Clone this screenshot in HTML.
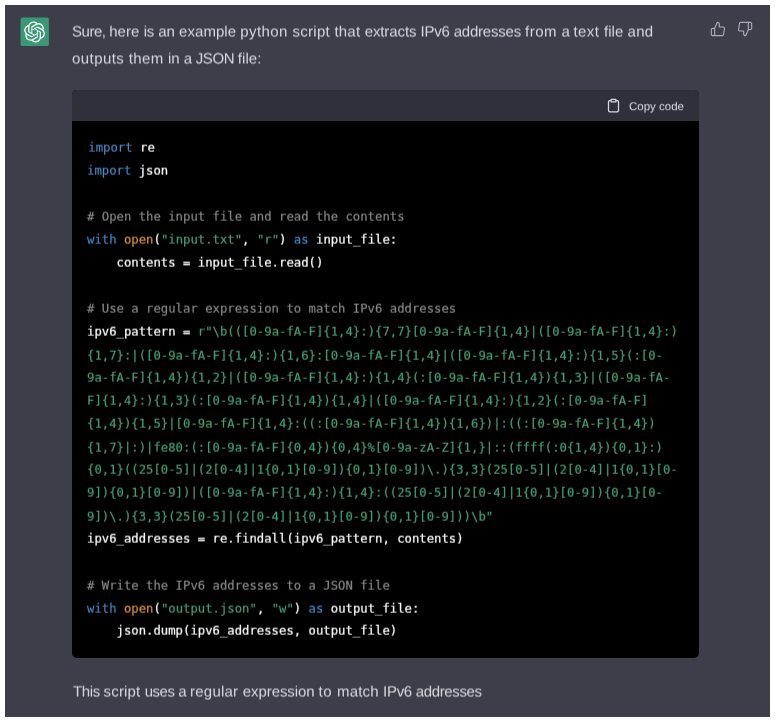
<!DOCTYPE html>
<html lang="en">
<head>
<meta charset="utf-8">
<title>ChatGPT</title>
<style>
html,body{margin:0;padding:0;background:#fff;}
body{width:775px;height:723px;position:relative;overflow:hidden;font-family:"Liberation Sans",sans-serif;}
.panel{position:absolute;left:5px;top:5px;width:765px;height:712px;background:#3e3e4a;box-sizing:border-box;}
.avatar{position:absolute;left:20px;top:17px;}
.txt{position:absolute;left:72px;color:#d5d8df;font-size:15px;line-height:27px;white-space:pre;height:27px;text-rendering:geometricPrecision;transform:translateY(0.5px) rotate(0.005deg);transform-origin:0 50%;}
.thumbs{position:absolute;top:21px;}
.code{position:absolute;left:72px;top:90px;width:627px;height:568px;background:#000;border-radius:5px;overflow:hidden;}
.chead{position:absolute;left:0;top:0;width:100%;height:31px;background:#30303a;}
.copy{position:absolute;left:556.6px;top:2px;height:31px;line-height:31px;font-size:11.5px;color:#d9d9e3;white-space:pre;text-rendering:geometricPrecision;transform:translateY(0.25px) rotate(0.005deg);transform-origin:0 50%;}
pre{position:absolute;left:15px;top:46px;margin:0;font-family:"DejaVu Sans Mono","Liberation Mono",monospace;font-size:12.27px;line-height:21.74px;color:#fff;white-space:pre;transform:translateY(0.65px) rotate(0.005deg) scaleY(1.06);transform-origin:0 0;}
pre,.txt,.copy{filter:blur(0.4px)}
pre{-webkit-text-stroke:0.2px currentColor}
pre span{-webkit-text-stroke:0.15px currentColor}
.k{color:#4789c6}.b{color:#e0963a}.s{color:#47a377}.c{color:#8a8a8a}
</style>
</head>
<body>
<div class="panel"></div>
<svg class="avatar" width="30" height="30" viewBox="0 0 30 30"><rect x="0.6" y="0.5" width="28.3" height="28.4" rx="1.5" fill="#3b9876"/><g transform="translate(3.82 4.14) scale(0.5268)"><path d="M37.5324 16.8707C37.9808 15.5241 38.1363 14.0974 37.9886 12.6859C37.8409 11.2744 37.3934 9.91076 36.676 8.68622C35.6126 6.83404 33.9882 5.3676 32.0373 4.4985C30.0864 3.62941 27.9098 3.40259 25.8215 3.85078C24.8796 2.7893 23.7219 1.94125 22.4257 1.36341C21.1295 0.785575 19.7249 0.491269 18.3058 0.500197C16.1708 0.495044 14.0893 1.16803 12.3614 2.42214C10.6335 3.67624 9.34853 5.44666 8.6917 7.47815C7.30085 7.76286 5.98686 8.3414 4.8377 9.17505C3.68854 10.0087 2.73073 11.0782 2.02839 12.312C0.956464 14.1591 0.498905 16.2988 0.721698 18.4228C0.944492 20.5467 1.83612 22.5449 3.268 24.1293C2.81966 25.4759 2.66413 26.9026 2.81182 28.3141C2.95951 29.7256 3.40701 31.0892 4.12437 32.3138C5.18791 34.1659 6.8123 35.6322 8.76321 36.5013C10.7141 37.3704 12.8907 37.5973 14.9789 37.1492C15.9208 38.2107 17.0786 39.0587 18.3747 39.6366C19.6709 40.2144 21.0755 40.5087 22.4946 40.4998C24.6307 40.5054 26.7133 39.8321 28.4418 38.5772C30.1704 37.3223 31.4556 35.5506 32.1119 33.5179C33.5027 33.2332 34.8167 32.6547 35.9659 31.821C37.115 30.9874 38.0728 29.9178 38.7752 28.684C39.8458 26.8371 40.3023 24.6979 40.0789 22.5748C39.8556 20.4517 38.9639 18.4544 37.5324 16.8707ZM22.4978 37.8849C20.7443 37.8874 19.0459 37.2733 17.6994 36.1501C17.7601 36.117 17.8666 36.0586 17.936 36.0161L25.9004 31.4156C26.1003 31.3019 26.2663 31.137 26.3813 30.9378C26.4964 30.7386 26.5563 30.5124 26.5549 30.2825V19.0542L29.9213 20.998C29.9389 21.0068 29.9541 21.0198 29.9656 21.0359C29.977 21.052 29.9842 21.0707 29.9867 21.0902V30.3889C29.9842 32.375 29.1946 34.2791 27.7909 35.6841C26.3872 37.0892 24.4838 37.8806 22.4978 37.8849ZM6.39227 31.0064C5.51397 29.4888 5.19742 27.7107 5.49804 25.9832C5.55718 26.0187 5.66048 26.0818 5.73461 26.1244L13.699 30.7248C13.8975 30.8408 14.1233 30.902 14.3532 30.902C14.583 30.902 14.8088 30.8408 15.0073 30.7248L24.731 25.1103V28.9979C24.7321 29.0177 24.7283 29.0376 24.7199 29.0556C24.7115 29.0736 24.6988 29.0893 24.6829 29.1012L16.6317 33.7497C14.9096 34.7416 12.8643 35.0097 10.9447 34.4954C9.02506 33.9811 7.38785 32.7263 6.39227 31.0064ZM4.29707 13.6194C5.17156 12.0998 6.55279 10.9364 8.19885 10.3327C8.19885 10.4013 8.19491 10.5228 8.19491 10.6071V19.808C8.19351 20.0378 8.25334 20.2638 8.36823 20.4629C8.48312 20.6619 8.64893 20.8267 8.84863 20.9404L18.5723 26.5542L15.206 28.4979C15.1894 28.5089 15.1703 28.5155 15.1505 28.5173C15.1307 28.5191 15.1107 28.516 15.0924 28.5082L7.04046 23.8557C5.32135 22.8601 4.06716 21.2235 3.55289 19.3046C3.03862 17.3858 3.30624 15.3413 4.29707 13.6194ZM31.955 20.0556L22.2312 14.4411L25.5976 12.4981C25.6142 12.4872 25.6333 12.4805 25.6531 12.4787C25.6729 12.4769 25.6928 12.4801 25.7111 12.4879L33.7631 17.1364C34.9967 17.849 36.0017 18.8982 36.6606 20.1613C37.3194 21.4244 37.6047 22.849 37.4832 24.2684C37.3617 25.6878 36.8382 27.0432 35.9743 28.1759C35.1103 29.3086 33.9415 30.1717 32.6047 30.6641C32.6047 30.5947 32.6047 30.4733 32.6047 30.3889V21.188C32.6066 20.9586 32.5474 20.7328 32.4332 20.5338C32.319 20.3348 32.154 20.1698 31.955 20.0556ZM35.3055 15.0128C35.2464 14.9765 35.1431 14.9142 35.069 14.8717L27.1045 10.2712C26.906 10.1554 26.6803 10.0943 26.4504 10.0943C26.2206 10.0943 25.9948 10.1554 25.7963 10.2712L16.0726 15.8858V11.9982C16.0715 11.9783 16.0753 11.9585 16.0837 11.9405C16.0921 11.9225 16.1048 11.9068 16.1207 11.8949L24.1719 7.25025C25.4053 6.53903 26.8158 6.19376 28.2383 6.25482C29.6608 6.31589 31.0364 6.78077 32.2044 7.59508C33.3723 8.40939 34.2842 9.53945 34.8334 10.8531C35.3826 12.1667 35.5464 13.6095 35.3055 15.0128ZM14.2424 21.9419L10.8752 19.9981C10.8576 19.9893 10.8423 19.9763 10.8309 19.9602C10.8195 19.9441 10.8122 19.9254 10.8098 19.9058V10.6071C10.8107 9.18295 11.2173 7.78848 11.9819 6.58696C12.7466 5.38544 13.8377 4.42659 15.1275 3.82264C16.4173 3.21869 17.8524 2.99464 19.2649 3.1767C20.6775 3.35876 22.0089 3.93941 23.1034 4.85067C23.0427 4.88379 22.937 4.94215 22.8668 4.98473L14.9024 9.58517C14.7025 9.69878 14.5366 9.86356 14.4215 10.0626C14.3065 10.2616 14.2466 10.4877 14.2479 10.7175L14.2424 21.9419ZM16.071 17.9991L20.4018 15.4978L24.7325 17.9975V22.9985L20.4018 25.4983L16.071 22.9985V17.9991Z" fill="#fff" fill-opacity="0.94"/></g></svg>

<div class="txt" style="top:18px;left:71.72px"><span style="letter-spacing:-0.47px">Sure, </span><span style="letter-spacing:0.05px">here </span><span style="letter-spacing:-0.14px">is </span><span style="letter-spacing:-0.02px">an </span><span style="letter-spacing:0.05px">example </span><span style="letter-spacing:0.42px">python </span><span style="letter-spacing:0.28px">script </span><span style="letter-spacing:0.20px">that </span><span style="letter-spacing:-0.09px">extracts </span><span style="letter-spacing:-0.21px">IPv6 </span><span style="letter-spacing:-0.20px">addresses </span><span style="letter-spacing:0.48px">from </span><span style="letter-spacing:-0.35px">a </span><span style="letter-spacing:0.45px">text </span><span style="letter-spacing:0.05px">file </span><span style="letter-spacing:0.29px">and</span></div>
<div class="txt" style="top:45px;left:71.97px"><span style="letter-spacing:0.43px">outputs </span><span style="letter-spacing:0.34px">them </span><span style="letter-spacing:-0.03px">in </span><span style="letter-spacing:-0.26px">a </span><span style="letter-spacing:-0.43px">JSON </span><span style="letter-spacing:0.06px">file:</span></div>

<svg class="thumbs" style="left:710.2px" width="16" height="16" viewBox="0 0 24 24" fill="none" stroke="#ababbd" stroke-width="1.7" stroke-linecap="round" stroke-linejoin="round"><path d="M14 9V5a3 3 0 0 0-3-3l-4 9v11h11.28a2 2 0 0 0 2-1.700l1.380-9a2 2 0 0 0-2-2.300zM7 22H4a2 2 0 0 1-2-2v-7a2 2 0 0 1 2-2h3"/></svg>
<svg class="thumbs" style="left:737px" width="16" height="16" viewBox="0 0 24 24" fill="none" stroke="#ababbd" stroke-width="1.7" stroke-linecap="round" stroke-linejoin="round"><path d="M10 15v4a3 3 0 0 0 3 3l4-9V2H5.720a2 2 0 0 0-2 1.700l-1.380 9a2 2 0 0 0 2 2.300zm7-13h2.670A2.310 2.310 0 0 1 22 4v7a2.310 2.310 0 0 1-2.330 2H17"/></svg>

<div class="code">
<div class="chead"><svg style="position:absolute;left:534px;top:8px" width="15" height="15" viewBox="0 0 24 24" fill="none" stroke="#d9d9e3" stroke-width="2" stroke-linecap="round" stroke-linejoin="round"><path d="M16 4h2a2 2 0 0 1 2 2v14a2 2 0 0 1-2 2H6a2 2 0 0 1-2-2V6a2 2 0 0 1 2-2h2"/><rect x="8" y="2" width="8" height="4" rx="1" ry="1"/></svg><div class="copy">Copy code</div></div>
<pre><span class="k" style="margin-left:1.3px">import</span> re
<span class="k">import</span> json

<span class="c"># Open the input file and read the contents</span>
<span class="k">with</span> <span class="b">open</span>(<span class="s">"input.txt"</span>, <span class="s">"r"</span>) <span class="k">as</span> input_file:
    contents = input_file.read()

<span class="c"># Use a regular expression to match IPv6 addresses</span>
ipv6_pattern = <span class="s">r"\b(([0-9a-fA-F]{1,4}:){7,7}[0-9a-fA-F]{1,4}|([0-9a-fA-F]{1,4}:)
{1,7}:|([0-9a-fA-F]{1,4}:){1,6}:[0-9a-fA-F]{1,4}|([0-9a-fA-F]{1,4}:){1,5}(:[0-
9a-fA-F]{1,4}){1,2}|([0-9a-fA-F]{1,4}:){1,4}(:[0-9a-fA-F]{1,4}){1,3}|([0-9a-fA-
F]{1,4}:){1,3}(:[0-9a-fA-F]{1,4}){1,4}|([0-9a-fA-F]{1,4}:){1,2}(:[0-9a-fA-F]
{1,4}){1,5}|[0-9a-fA-F]{1,4}:((:[0-9a-fA-F]{1,4}){1,6})|:((:[0-9a-fA-F]{1,4})
{1,7}|:)|fe80:(:[0-9a-fA-F]{0,4}){0,4}%[0-9a-zA-Z]{1,}|::(ffff(:0{1,4}){0,1}:)
{0,1}((25[0-5]|(2[0-4]|1{0,1}[0-9]){0,1}[0-9])\.){3,3}(25[0-5]|(2[0-4]|1{0,1}[0-
9]){0,1}[0-9])|([0-9a-fA-F]{1,4}:){1,4}:((25[0-5]|(2[0-4]|1{0,1}[0-9]){0,1}[0-
9])\.){3,3}(25[0-5]|(2[0-4]|1{0,1}[0-9]){0,1}[0-9]))\b"</span>
ipv6_addresses = re.findall(ipv6_pattern, contents)

<span class="c"># Write the IPv6 addresses to a JSON file</span>
<span class="k">with</span> <span class="b">open</span>(<span class="s">"output.json"</span>, <span class="s">"w"</span>) <span class="k">as</span> output_file:
    json.dump(ipv6_addresses, output_file)</pre>
</div>

<div class="txt" style="top:678px;left:72.66px"><span style="letter-spacing:-0.40px">This </span><span style="letter-spacing:0.18px">script </span><span style="letter-spacing:-0.50px">uses </span><span style="letter-spacing:-0.34px">a </span><span style="letter-spacing:0.24px">regular </span><span style="letter-spacing:-0.08px">expression </span><span style="letter-spacing:0.58px">to </span><span style="letter-spacing:0.17px">match </span><span style="letter-spacing:-0.29px">IPv6 </span><span style="letter-spacing:-0.38px">addresses</span></div>
</body>
</html>
